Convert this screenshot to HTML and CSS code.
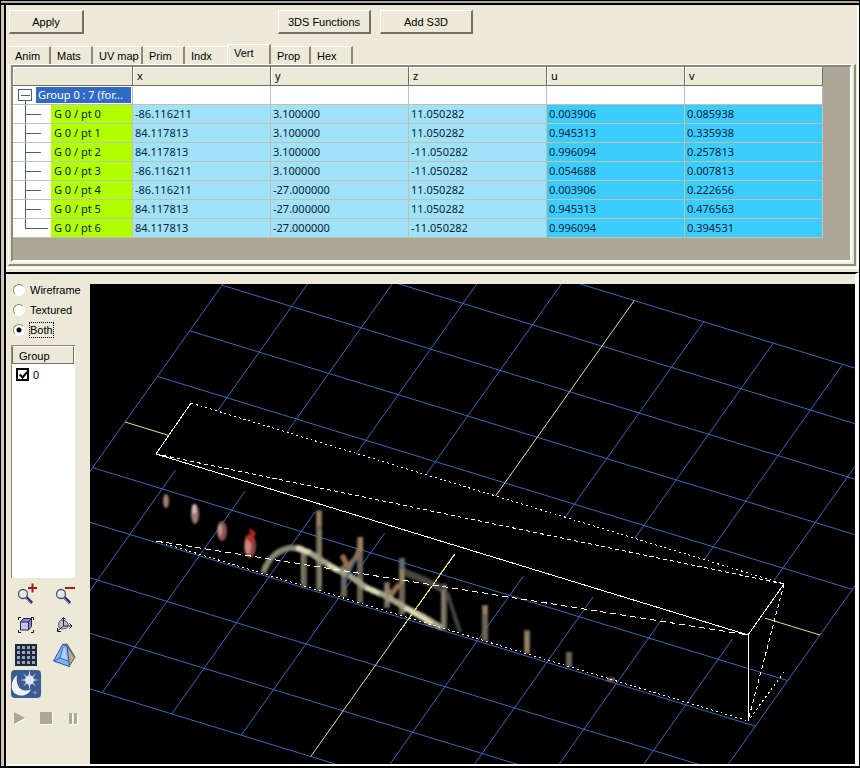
FILE: index.html
```html
<!DOCTYPE html>
<html lang="en">
<head>
<meta charset="utf-8">
<title>Model editor</title>
<link rel="stylesheet" href="styles.css">
</head>
<body>
<div class="window">
  <section class="editor">
    <div class="toolbar">
      <button class="btn apply" type="button">Apply</button>
      <button class="btn" type="button">3DS Functions</button>
      <button class="btn" type="button">Add S3D</button>
    </div>
    <div class="tabs" role="tablist">
      <button class="tab" role="tab">Anim</button>
      <button class="tab" role="tab">Mats</button>
      <button class="tab wide" role="tab">UV map</button>
      <button class="tab" role="tab">Prim</button>
      <button class="tab plain" role="tab">Indx</button>
      <button class="tab active" role="tab" aria-selected="true">Vert</button>
      <button class="tab narrow" role="tab">Prop</button>
      <button class="tab" role="tab">Hex</button>
    </div>
    <div class="sheet">
      <div class="well">
        <table class="grid">
          <colgroup><col class="c-name"><col><col><col><col><col></colgroup>
          <thead>
            <tr><th></th><th>x</th><th>y</th><th>z</th><th>u</th><th>v</th></tr>
          </thead>
          <tbody>
            <tr class="group"><td><div class="node"><span class="twig root"></span><span class="label">Group 0 : 7 (for...</span></div></td><td></td><td></td><td></td><td></td><td></td></tr>
            <tr><td><div class="node"><span class="twig"></span><span class="label">G 0 / pt 0</span></div></td><td>-86.116211</td><td>3.100000</td><td>11.050282</td><td>0.003906</td><td>0.085938</td></tr>
            <tr><td><div class="node"><span class="twig"></span><span class="label">G 0 / pt 1</span></div></td><td>84.117813</td><td>3.100000</td><td>11.050282</td><td>0.945313</td><td>0.335938</td></tr>
            <tr><td><div class="node"><span class="twig"></span><span class="label">G 0 / pt 2</span></div></td><td>84.117813</td><td>3.100000</td><td>-11.050282</td><td>0.996094</td><td>0.257813</td></tr>
            <tr><td><div class="node"><span class="twig"></span><span class="label">G 0 / pt 3</span></div></td><td>-86.116211</td><td>3.100000</td><td>-11.050282</td><td>0.054688</td><td>0.007813</td></tr>
            <tr><td><div class="node"><span class="twig"></span><span class="label">G 0 / pt 4</span></div></td><td>-86.116211</td><td>-27.000000</td><td>11.050282</td><td>0.003906</td><td>0.222656</td></tr>
            <tr><td><div class="node"><span class="twig"></span><span class="label">G 0 / pt 5</span></div></td><td>84.117813</td><td>-27.000000</td><td>11.050282</td><td>0.945313</td><td>0.476563</td></tr>
            <tr><td><div class="node"><span class="twig last"></span><span class="label">G 0 / pt 6</span></div></td><td>84.117813</td><td>-27.000000</td><td>-11.050282</td><td>0.996094</td><td>0.394531</td></tr>
          </tbody>
        </table>
      </div>
    </div>
  </section>

  <section class="viewer">
    <aside class="side">
      <div class="modes">
        <label><input type="radio" name="mode"><span>Wireframe</span></label>
        <label><input type="radio" name="mode"><span>Textured</span></label>
        <label><input type="radio" name="mode" checked><span class="focus">Both</span></label>
      </div>
      <div class="list">
        <div class="list-head">Group</div>
        <label class="list-item"><input type="checkbox" checked><span>0</span></label>
      </div>
      <div class="tools">
        <button class="tool" type="button" aria-label="Zoom in"><svg width="24" height="24" viewBox="0 0 24 24"><path d="M12 14l6 6" stroke="#29296c" stroke-width="3"/><path d="M11.500 14.500l6 6" stroke="#8a8ab8" stroke-width="1"/><circle cx="9" cy="11" r="4.500" fill="#dfe8ee" stroke="#55556a" stroke-width="1.300"/><path d="M7 10.500q0-2 2-2" stroke="#fff" fill="none"/><path d="M14 5h9M18.500 .5v9" stroke="#b01818" stroke-width="2"/></svg></button>
        <button class="tool" type="button" aria-label="Zoom out"><svg width="24" height="24" viewBox="0 0 24 24"><path d="M12 14l6 6" stroke="#29296c" stroke-width="3"/><path d="M11.500 14.500l6 6" stroke="#8a8ab8" stroke-width="1"/><circle cx="9" cy="11" r="4.500" fill="#dfe8ee" stroke="#55556a" stroke-width="1.300"/><path d="M7 10.500q0-2 2-2" stroke="#fff" fill="none"/><path d="M13 5h10" stroke="#b01818" stroke-width="2"/></svg></button>
        <button class="tool" type="button" aria-label="Bounding box"><svg width="24" height="24" viewBox="0 0 24 24"><path d="M4.500 7V4.500H7M17 4.500h2.500V7M4.500 17v2.500H7M17 19.500h2.500V17" fill="none" stroke="#111"/><path d="M6.500 9l3-3.500h8v8l-3 3.500z" fill="#8c8cc4" stroke="#222255"/><path d="M6.500 9h8v8h-8z" fill="#c4c4e4" stroke="#222255"/><path d="M14.500 9l3-3.500" stroke="#222255"/></svg></button>
        <button class="tool" type="button" aria-label="Axes"><svg width="24" height="24" viewBox="0 0 24 24"><path d="M6.500 12q0-5 5-5 4 1 5 5-1 4-5 4-5 0-5-4z" fill="#bfbfc6" stroke="#55556a"/><path d="M11.500 5v8h8M11.500 13l-6 5" fill="none" stroke="#222255"/><path d="M9.500 6.500l2-2 2 2M17.500 10.500l2.500 2.500-2.500 2.500M5.500 15v3.500H9" fill="none" stroke="#111"/></svg></button>
        <button class="tool" type="button" aria-label="Grid"><svg width="24" height="24" viewBox="0 0 24 24"><path d="M1 1h22v22H1z" fill="#20283c"/><path d="M3 3h3v3H3zM8 3h3v3H8zM13 3h3v3h-3zM18 3h3v3h-3zM3 8h3v3H3zM8 8h3v3H8zM13 8h3v3h-3zM18 8h3v3h-3zM3 13h3v3H3zM8 13h3v3H8zM13 13h3v3h-3zM18 13h3v3h-3zM3 18h3v3H3zM8 18h3v3H8zM13 18h3v3h-3zM18 18h3v3h-3z" fill="#9aa5bb"/></svg></button>
        <button class="tool" type="button" aria-label="Shading"><svg width="24" height="24" viewBox="0 0 24 24"><path d="M11 1.500L15 1l8 13-6 9.500z" fill="#b8aa86" stroke="#5f5a50"/><path d="M10.500 1.500L15 3l2.500 20.500L1.500 18z" fill="#7fb2f8" stroke="#2a55a4"/><path d="M10 4l3.500 1 2 13-8-2.500z" fill="#a9d0ff"/><path d="M15 3l7.500 11M11 4L8 15l8 3M8 15l-6 3" stroke="#3f62a8" fill="none"/></svg></button>
        <button class="tool big" type="button" aria-label="Day and night"><svg width="30" height="28" viewBox="0 0 30 28"><rect width="30" height="28" rx="4" fill="#3c5a94"/><path d="M18.500 0l1.300 7h-2.600zM18.500 20l1.300-7h-2.600zM9 10l7-1.300v2.600zM28 10l-7-1.300v2.600zM12 3.500l5.500 4-1.500 1.500zM25 3.500l-5.500 4L21 9zM12 16.500l4-5.500 1.500 1.500zM25 16.500L21 11l-1.500 1.500z" fill="#c5d3e6"/><circle cx="18.500" cy="10" r="4.500" fill="#dce8f4"/><path d="M6 5C-2 12-1 24 9 25.500c5 .5 9-2 11-6-6 2.500-11 .5-13-4C5.500 12 5.500 8.500 6 5z" fill="#eef2f6"/><path d="M24 20l1 2 2 .5-2 .5-1 2-1-2-2-.5 2-.5z" fill="#7f9ac4"/></svg></button>
      </div>
      <div class="player">
        <button class="tool" type="button" aria-label="Play"><svg width="16" height="16" viewBox="0 0 16 16"><path d="M4 3l11 6L4 15z" fill="#fff"/><path d="M3 2l11 6L3 14z" fill="#aca899"/></svg></button>
        <button class="tool" type="button" aria-label="Stop"><svg width="16" height="16" viewBox="0 0 16 16"><path d="M3 3h12v12H3z" fill="#fff"/><path d="M2 2h12v12H2z" fill="#aca899"/></svg></button>
        <button class="tool" type="button" aria-label="Pause"><svg width="16" height="16" viewBox="0 0 16 16"><path d="M5 4h3v11H5zM10 4h3v11h-3z" fill="#fff"/><path d="M4 3h3v11H4zM9 3h3v11H9z" fill="#aca899"/></svg></button>
      </div>
    </aside>
    <div class="stage">
      <svg class="scene" viewBox="90 284 765 480" preserveAspectRatio="xMinYMin slice" role="img" aria-label="3D view">
        <defs>
          <filter id="soft" x="-5%" y="-5%" width="110%" height="110%"><feGaussianBlur stdDeviation="1.2"/></filter>
        </defs>
        <g class="floor" transform="matrix(69.5 21.3 -32.35 45.6 472.5 528.5)">
          <path class="blue" d="M-5-5V5M-4-5V5M-3-5V5M-2-5V5M-1-5V5M1-5V5M2-5V5M3-5V5M4-5V5M5-5V5M-5-5H5M-5-4H5M-5-3H5M-5-2H5M-5-1H5M-5 1H5M-5 2H5M-5 3H5M-5 4H5M-5 5H5"/>
          <path class="yellow" d="M0-5V5M-5 0H5"/>
        </g>
        <path d="M191 403L784 584 766 618 738 641 160 465 156 454z" fill="#000"/>
        <!-- textured sprites -->
        <g filter="url(#soft)" fill="none">
          <g stroke="none">
            <ellipse cx="166" cy="501" rx="3" ry="7" fill="#a37c76"/>
            <ellipse cx="195" cy="514" rx="4" ry="10" fill="#a07474"/>
            <ellipse cx="194" cy="509" rx="2" ry="5" fill="#dcc0c0"/>
            <ellipse cx="222" cy="531" rx="5" ry="10" fill="#8c5450"/>
            <ellipse cx="220" cy="530" rx="2" ry="6" fill="#c89a94"/>
            <ellipse cx="250" cy="546" rx="6" ry="12" fill="#8a4a46"/>
            <ellipse cx="248" cy="546" rx="3" ry="8" fill="#cc8c84"/>
            <path d="M250 530l4 4-4 6 3 3M245 537l4 2" stroke="#c81c14" stroke-width="3"/>
          </g>
          <g stroke="#6c6557" stroke-width="6">
            <path d="M304 550v37M319 510v81M344 565v32M360 537v66M387 582v26M402 558v57M444 584v46M485 605v36M527 630v24M569 652v15"/>
            <path d="M447 592l13 40" stroke="#454341" stroke-width="4"/>
            <path d="M404 572l20 8 20 10" stroke="#4a4640" stroke-width="7"/>
          </g>
          <path d="M342 555l6 12 9-11 4-14M385 588l7 6 7-10" stroke="#94704f" stroke-width="5"/>
          <path d="M361 537v14M402 570v14M527 632v20M485 606v8M319 512v14" stroke="#9a8262" stroke-width="4"/>
          <path d="M402 559v10" stroke="#5c6c70" stroke-width="5"/>
          <path d="M263 573q5-14 13-19 12-9 27-5" stroke="#85866f" stroke-width="6"/>
          <path d="M296 548l14 5 8 5 16 10 16 8 17 12 19 8 20 12 18 9 18 11" stroke="#a5a087" stroke-width="6"/>
          <path d="M296 548l14 4M328 565l10 6M366 587l13 7M405 608l14 8 13 8" stroke="#dcd9b8" stroke-width="5"/>
          <path d="M342 586l14-28" stroke="#4f6c83" stroke-width="3"/>
          <path d="M607 679h8" stroke="#a07a70" stroke-width="3"/>
          <path d="M443 590v38M387 584v20M320 530v56M302 554v30" stroke="#8f8770" stroke-width="2"/>
        </g>
        <path class="yellow over" d="M455 554L400 631"/>
        <path class="edge" d="M191 403L156 454 748 635 784 584M748 635V721"/>
        <path class="edge dots" d="M191 403L784 584M156 541L748 721M784 672L748 721"/>
        <path class="edge dash" d="M156 454L784 584M784 584L748 721"/>
        <path class="edge long" d="M156 541L748 635"/>
      </svg>
    </div>
  </section>
</div>
</body>
</html>
```
FILE: styles.css
```css
* { box-sizing: border-box; }

body {
  margin: 0;
  background: #000;
  color: #000;
  font: 11px/14px "Liberation Sans", Arial, sans-serif;
}

button, input { font: inherit; color: inherit; margin: 0; }

.window {
  display: flex;
  flex-direction: column;
  height: 100vh;
  border: 1px solid #000;
  border-bottom-width: 2px;
  padding: 5px 0 0 5px;
  background: linear-gradient(#aaa 0 2px, #000 2px 4px, transparent 4px), linear-gradient(90deg, #cdc4bc 0 3px, #000 3px 5px, #ece9d8 5px);
}

/* upper pane */
.editor {
  flex: none;
  padding: 4px 1px 1px 2px;
  border-right: 2px solid #fff;
  border-bottom: 2px solid #fff;
}

.toolbar {
  display: flex;
  gap: 9px;
  padding: 0 1px;
}

.btn {
  width: 93px;
  height: 24px;
  padding: 0;
  background: #ece9d8;
  border: 1px solid #fff;
  border-right: 2px solid #716f64;
  border-bottom: 2px solid #716f64;
}

.apply { width: 75px; margin-right: 185px; }

.tabs {
  display: flex;
  align-items: flex-end;
  height: 30px;
  padding-left: 1px;
}

.tab {
  flex: 0 0 42px;
  height: 18px;
  padding: 0 0 0 6px;
  text-align: left;
  white-space: nowrap;
  background: none;
  border: 0 solid #fff;
  border-top-width: 1px;
  border-right: 2px solid #8d8a7c;
}

.tab.wide { flex-basis: 50px; }
.tab.narrow { flex-basis: 40px; }
.tab.plain { border-right-color: transparent; }
.tab.active {
  flex-basis: 44px;
  height: 20px;
  padding-bottom: 3px;
  border-left-width: 1px;
}

.sheet {
  padding: 0 2px 2px;
  border: 1px solid #fff;
  border-right: 2px solid #8d8a7c;
  border-bottom: 2px solid #8d8a7c;
}

.well {
  padding-bottom: 22px;
  background: #aca899;
  border: 2px solid #8d8a7c;
  border-right-color: #fff;
  border-bottom-color: #fff;
}

.grid {
  width: 810px;
  table-layout: fixed;
  border-collapse: separate;
  border-spacing: 0;
  font-family: "Noto Sans", "Open Sans", sans-serif;
}

.c-name { width: 120px; }

.grid th, .grid td {
  height: 19px;
  padding: 0 0 0 2px;
  line-height: 18px;
  text-align: left;
  font-weight: normal;
  white-space: nowrap;
  border-right: 1px solid #c3bfb4;
  border-bottom: 1px solid #c3bfb4;
}

.grid th {
  padding-left: 4px;
  background: #ece9d8;
  border-right-color: #716f64;
  border-bottom-color: #716f64;
  box-shadow: inset 1px 1px #fff;
}

.grid td { background: #a0e2f8; color: #0a1e3c; }
.grid td:nth-child(n+5) { background: #3ccdff; }
.grid td:first-child { padding: 0; background: #fff; }
.grid .group td { background: #fff; }

.node { display: flex; height: 18px; }
.label { flex: 1; padding-left: 3px; background: #b2ff00; }

.group .label {
  margin: 1px 1px 1px -15px;
  padding-left: 2px;
  line-height: 16px;
  background: #316ac5;
  color: #fff;
  z-index: 1;
}

.twig {
  flex: 0 0 38px;
  background:
    linear-gradient(#4a6078, #4a6078) 12px 0 / 1px 18px no-repeat,
    linear-gradient(#4a6078, #4a6078) 12px 9px / 16px 1px no-repeat;
}

.twig.last {
  background:
    linear-gradient(#4a6078, #4a6078) 12px 0 / 1px 10px no-repeat,
    linear-gradient(#4a6078, #4a6078) 12px 9px / 23px 1px no-repeat;
}

.twig.root {
  background:
    linear-gradient(#4a6078, #4a6078) 8px 9px / 9px 1px no-repeat,
    linear-gradient(#fff, #fff) 6px 4px / 12px 10px no-repeat,
    linear-gradient(#4a6078, #4a6078) 5px 3px / 14px 12px no-repeat,
    linear-gradient(#4a6078, #4a6078) 12px 15px / 1px 3px no-repeat;
}

/* lower pane */
.viewer {
  flex: 1;
  display: flex;
  min-height: 0;
  margin-top: 3px;
  padding-top: 10px;
  border-top: 2px solid #000;
  border-right: 4px solid #fff;
  border-bottom: 2px solid #fff;
}

.side {
  flex: 0 0 84px;
  display: flex;
  flex-direction: column;
  padding: 0 7px 38px 5px;
}

.modes {
  margin-top: -4px;
  padding-bottom: 5px;
}

.modes label {
  display: flex;
  align-items: center;
  height: 20px;
  padding-left: 2px;
  white-space: nowrap;
  gap: 5px;
}

.modes input {
  appearance: none;
  flex: none;
  width: 12px;
  height: 12px;
  border: 1px solid #8d8a7c;
  border-right-color: #fff;
  border-bottom-color: #fff;
  border-radius: 50%;
  background: #fff;
}

.modes input:checked { background: radial-gradient(#000 0 2px, #fff 3px); }
.focus { outline: 1px dotted #000; }

.list {
  flex: 1;
  width: 64px;
  margin-bottom: 2px;
  background: #fff;
  border-left: 1px solid #8d8a7c;
  border-top: 1px solid #8d8a7c;
}

.list-head {
  height: 18px;
  width: 62px;
  padding: 2px 6px;
  background: #ece9d8;
  border: 1px solid #716f64;
  border-top-color: #fff;
}

.list-item {
  display: flex;
  align-items: center;
  gap: 4px;
  height: 21px;
  padding-left: 4px;
}

.list-item input {
  appearance: none;
  position: relative;
  width: 13px;
  height: 13px;
  border: 2px solid #000;
  background: #fff;
}

.list-item input:checked::after {
  content: "";
  position: absolute;
  left: 3px;
  top: 0;
  width: 3px;
  height: 6px;
  border: solid #000;
  border-width: 0 2px 2px 0;
  transform: rotate(42deg);
}

.tools {
  display: grid;
  grid-template-columns: 30px 30px;
  grid-auto-rows: 30px;
  column-gap: 8px;
}

.tool {
  display: grid;
  place-items: center;
  padding: 0;
  background: none;
  border: 0;
}

.tool.big { place-items: start; }

.player {
  display: flex;
  justify-content: space-between;
  margin-top: 10px;
  padding-right: 2px;
}

.stage { flex: 1; min-width: 0; background: #000; }
.scene { display: block; width: 100%; height: 100%; }
.scene path { shape-rendering: crispEdges; }
.floor path { vector-effect: non-scaling-stroke; fill: none; }
.blue { stroke: #3b68ba; }
.yellow { stroke: #e0e080; fill: none; }
.edge { stroke: #fff; fill: none; }
.dots { stroke-dasharray: 2 3; }
.dash { stroke-dasharray: 4 3; }
.long { stroke-dasharray: 6 4; }
```
